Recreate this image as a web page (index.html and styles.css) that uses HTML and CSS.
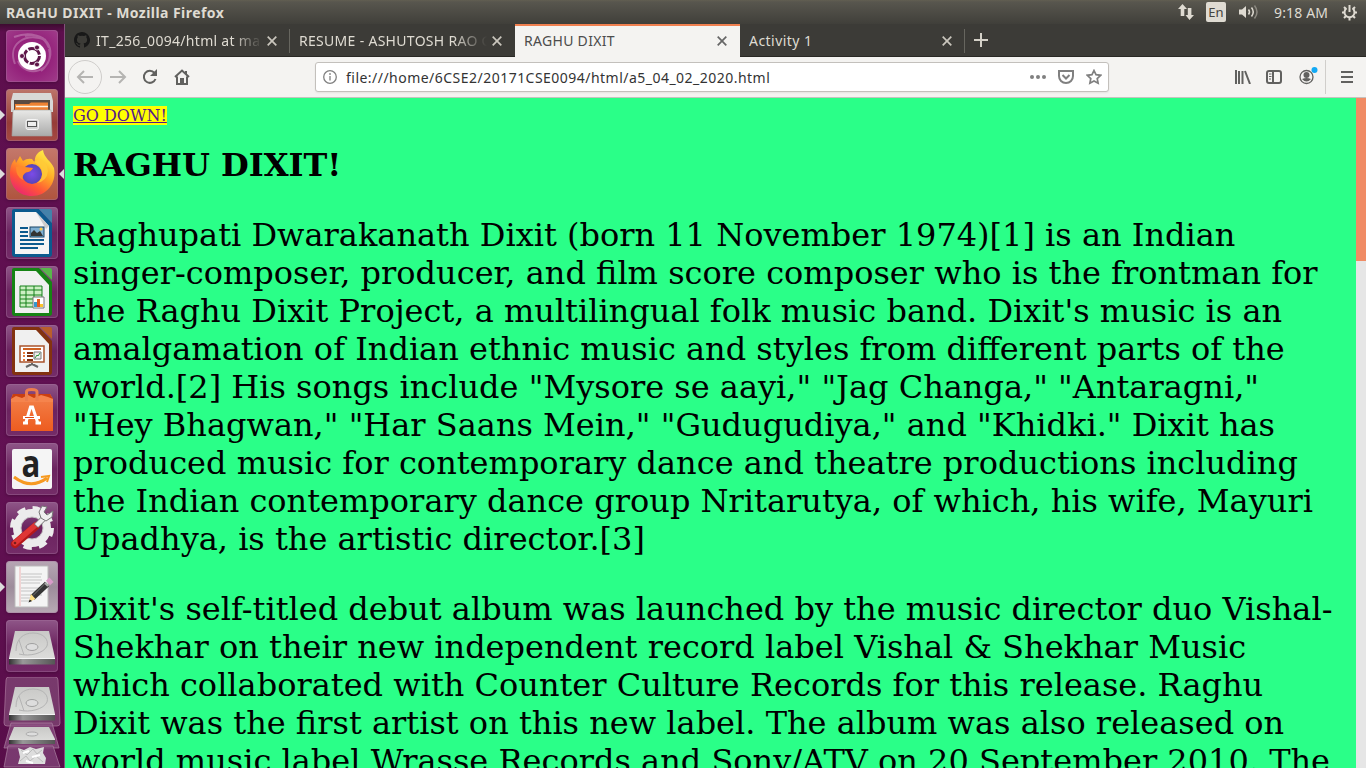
FILE: index.html
```html
<!DOCTYPE html>
<html lang="en">
<head>
<meta charset="utf-8">
<title>RAGHU DIXIT</title>
<link rel="stylesheet" href="styles.css">
</head>
<body>
<svg class="defs" width="0" height="0">
  <defs>
    <linearGradient id="silver" x2="0" y2="1"><stop stop-color="#e9e9e7"/><stop offset="1" stop-color="#aaa"/></linearGradient>
    <linearGradient id="metal" x2="0" y2="1"><stop stop-color="#c9c9c7"/><stop offset="1" stop-color="#e0e0de"/></linearGradient>
    <linearGradient id="orange" x2="0" y2="1"><stop stop-color="#f3824b"/><stop offset="1" stop-color="#ed5c20"/></linearGradient>
    <linearGradient id="fire" x1=".8" y1="0" x2=".2" y2="1"><stop stop-color="#fff04b"/><stop offset=".4" stop-color="#ffab25"/><stop offset=".7" stop-color="#ff5636"/><stop offset="1" stop-color="#e82079"/></linearGradient>
    <radialGradient id="globe"><stop stop-color="#7c4be8"/><stop offset="1" stop-color="#5745b8"/></radialGradient>
    <linearGradient id="edge" x2="1" y2="0"><stop stop-color="#333"/><stop offset=".3" stop-color="#999"/><stop offset="1" stop-color="#555"/></linearGradient>
    <g id="drive">
      <path d="M9 11H43L49 38V44H3V38Z" fill="url(#metal)"/>
      <path d="M3 39H49V44.500H3Z" fill="url(#edge)"/><path d="M3 38.500H49" stroke="#f5f5f5"/>
      <path d="M10 31C10 19 17 13 27 13C38 13 43 20 41 26C38 33 24 37 13 34M13 20L18 35" fill="none" stroke="#b4b4b4"/>
      <ellipse cx="26" cy="27" rx="6" ry="3.500" fill="#ddd" stroke="#a0a0a0"/>
    </g>
  </defs>
</svg>
<header class="panel">
  <span class="panel-title">RAGHU DIXIT - Mozilla Firefox</span>
  <div class="indicators">
    <svg width="18" height="18" viewBox="0 0 18 18"><path d="M5.500 1L10 6H7.300V13H3.700V6H1ZM12.500 17L8.500 12H10.800V5H14.400V12H17Z" fill="#dfdbd2"/></svg>
    <span class="lang">En</span>
    <svg class="sound" width="20" height="16" viewBox="0 0 20 16"><path d="M0 5.500H3L7 2V14L3 10.500H0Z" fill="#dfdbd2"/><path d="M9.500 5.500Q11.500 8 9.500 10.500M12.500 3.500Q16 8 12.500 12.500" fill="none" stroke="#dfdbd2" stroke-width="1.500"/><path d="M15.500 1.500Q20.500 8 15.500 14.500" fill="none" stroke="#8b8880" stroke-width="1.500"/></svg>
    <span class="clock">9:18 AM</span>
    <svg class="gear" width="17" height="17" viewBox="0 0 17 17"><g fill="none" stroke="#dfdbd2" stroke-width="2"><path d="M5.500 4.300A5 5 0 1 0 11.500 4.300M8.500 1V8"/><path d="M8.500 13V16.500M1 8.500H4M13 8.500H16M3 3L5 5M14 3L12 5M3 14L5 12M14 14L12 12"/></g></svg>
  </div>
</header>
<div class="desktop">
<nav class="launcher">
  <div class="tile dash"><svg viewBox="0 0 52 52"><g fill="none" stroke="#fff" stroke-opacity=".25" stroke-width="2"><path d="M9 34C1 14 19 2 40 10M19 6C42 0 54 25 35 41M43 19C49 42 20 49 12 31M8 7C24 1 38 5 43 18"/></g><circle cx="26" cy="26" r="14" fill="#fff"/><circle cx="26" cy="26" r="7.500" fill="none" stroke="#5e1649" stroke-width="3" stroke-dasharray="14 1.700"/><g fill="#5e1649" stroke="#fff" stroke-width=".8"><circle cx="16" cy="26" r="2.500"/><circle cx="31" cy="17.500" r="2.500"/><circle cx="31" cy="34.500" r="2.500"/></g></svg></div>
  <div class="tile red run"><svg viewBox="0 0 52 52"><path d="M7 4H45L47 12V23H5V12Z" fill="#d8d8d6"/><path d="M8 11H44V22H8Z" fill="#5a4a42"/><path d="M9 15H23L25 13.500H42V22H9Z" fill="#ef8232"/><path d="M10 17.500H42" stroke="#fff2df" stroke-width="1.500"/><path d="M7 21H45L46 47H6Z" fill="url(#silver)" stroke="#a3a3a0" stroke-width=".6"/><rect x="20" y="30.500" width="12.500" height="10" rx="2" fill="#d3d3d3" stroke="#f4f4f4"/><rect x="21.500" y="32.500" width="9" height="5" fill="#eee" stroke="#555"/></svg></div>
  <div class="tile red run active"><svg viewBox="0 0 52 52"><path d="M4 26C4 19 6 14 9 11L10 15L14 8L17 13Q21 10 26 11L29 15C28 9 31 4 37 2C38 10 45 13 48 20C51 36 40 48 26 48C13 48 4 39 4 26Z" fill="url(#fire)"/><circle cx="26" cy="26" r="10" fill="url(#globe)"/><path d="M10 19Q14 17 19 19L27 20Q25 24 20 24.500C17 26 16 29 17 32Q10 29 10 19Z" fill="#ff8a2c"/><path d="M27 14Q34 16 36 23Q37 31 31 35Q41 33 42 23Q41 14 34 11Z" fill="#ffcc38" opacity=".8"/></svg></div>
  <div class="tile writer"><svg viewBox="0 0 52 52"><path d="M8 2H33L46 16V47Q46 50 43 50H9Q6 50 6 47V4Q6 2 8 2Z" fill="#0b5a8e"/><path d="M33 2H44Q46 2 46 4V16Z" fill="#4382aa"/><path d="M9 5H30L43 19V47H9Z" fill="#f4f4f4"/><path d="M30 5L43 19L40 22Z" fill="#ccc"/><g stroke="#0b5a8e" stroke-width="2"><path d="M14 21H22M14 25H22M14 29H22M14 33H38M14 37H38M14 41H32"/></g><rect x="24" y="20" width="14" height="10" fill="#7eafd2" stroke="#174465"/><path d="M25 29V26L28 23L31 26L34 24L37 29Z" fill="#333"/><circle cx="35" cy="22" r="1.500" fill="#ffce45"/></svg></div>
  <div class="tile"><svg viewBox="0 0 52 52"><path d="M8 2H33L46 16V47Q46 50 43 50H9Q6 50 6 47V4Q6 2 8 2Z" fill="#168314"/><path d="M34 2H44Q46 2 46 4V14Z" fill="#58b64b"/><path d="M9 5H30L43 19V47H9Z" fill="#f0f0f0"/><path d="M14 20H36V41H14Z" fill="#ccefc3" stroke="#16811b"/><path d="M14 24H36M14 29H36M14 33H36M14 37H36M20 20V41M28 20V41" stroke="#16811b"/><path d="M27 31H38V42H27Z" fill="#fff" stroke="#777"/><path d="M28 36H31V41H28Z" fill="#3498d0"/><path d="M31 33H34V41H31Z" fill="#e45c20"/><path d="M34 38H37V41H34Z" fill="#fcc32c"/></svg></div>
  <div class="tile"><svg viewBox="0 0 52 52"><path d="M8 2H33L46 16V47Q46 50 43 50H9Q6 50 6 47V4Q6 2 8 2Z" fill="#833210"/><path d="M34 2H44Q46 2 46 4V14Z" fill="#b95e2b"/><path d="M9 5H30L43 19V47H9Z" fill="#f0f0f0"/><path d="M14 21H38V37H14Z" fill="#fff" stroke="#a9532d" stroke-width="1.500"/><path d="M17 24H35" stroke="#cf6021" stroke-width="2"/><path d="M21 28H27M21 31H27M21 35H27" stroke="#81300f" stroke-width="2"/><path d="M17 28H19M17 31H19M17 35H19" stroke="#e57b3b" stroke-width="2"/><path d="M28 27H35V34H28Z" fill="#eee" stroke="#777"/><path d="M29 33L31 30L32 31L34 28" fill="none" stroke="#2b9b3d"/><path d="M26 38V40M26 39L20 42M26 39L32 42" stroke="#666" stroke-width="2"/></svg></div>
  <div class="tile"><svg viewBox="0 0 52 52"><path d="M7 10H44L47 15V47H5V15Z" fill="url(#orange)"/><path d="M5 15H47L44 10H7Z" fill="#ca3f10"/><path d="M5 15L10 12L16 14L22 11L28 14L35 11L42 13L47 15V18H5Z" fill="#f5844d"/><path d="M20.500 17V8Q20.500 5.500 25.500 5.500Q31 5.500 31 8V17" fill="none" stroke="#ec7d4e" stroke-width="3"/><path d="M20 38L24.500 23H26.500L31.500 38M17 33.500H34M17 39H22M29.500 39H35" fill="none" stroke="#fff" stroke-width="3"/><path d="M19 33.500H28" stroke="#dd4812"/></svg></div>
  <div class="tile"><svg viewBox="0 0 52 52"><rect x="6" y="6" width="40" height="40" rx="2" fill="#f5f5f5"/><text class="amazon" transform="translate(15.500 33.500) scale(.82 1)">a</text><path d="M8 34Q25 47 41 35" fill="none" stroke="#f69a22" stroke-width="3"/><path d="M35 34L43 33L41 39" fill="none" stroke="#f69a22" stroke-width="2"/></svg></div>
  <div class="tile"><svg viewBox="0 0 52 52"><circle cx="26" cy="26" r="15" fill="none" stroke="#ececec" stroke-width="8"/><circle cx="26" cy="26" r="19" fill="none" stroke="#ececec" stroke-width="6" stroke-dasharray="8 6.920"/><circle cx="26" cy="26" r="11" fill="none" stroke="#c1c1c1"/><path d="M30 24L9 42" stroke="#b41819" stroke-width="8" stroke-linecap="round"/><path d="M29.500 23L9 41" stroke="#df3635" stroke-width="5.500" stroke-linecap="round"/><path d="M30 24L37 17" stroke="#777" stroke-width="6"/><path d="M30.500 23.500L38 16" stroke="#eee" stroke-width="4.500"/><path d="M36 4L33 10L35 16L40 19L46 15L47 9L41 13L38 10L41 5Z" fill="#eee" stroke="#777"/><circle cx="9" cy="41" r="1.300" fill="#761c1c"/></svg></div>
  <div class="tile gray run"><svg viewBox="0 0 52 52"><path d="M9 5H42V46H9Z" fill="#f4f4f4" stroke="#bbb"/><path d="M14 6V45" stroke="#edb4b4"/><path d="M15 13H36M15 16H35M15 19H36M15 22H34M15 27H36M15 30H32M15 34H36M15 37H28M15 40H26" stroke="#c4c4c4"/><path d="M26.500 36.500L41 23" stroke="#353535" stroke-width="6"/><path d="M27 34.500L40 21.500" stroke="#777"/><path d="M42 22L45.500 18.700" stroke="#d99bc9" stroke-width="6"/><path d="M39 22L42 25" stroke="#aaa" stroke-width="2"/><path d="M25 33L29.500 38L23 41Z" fill="#ffe083"/><path d="M23.700 38.500L22.500 41.500L26 40Z" fill="#222"/></svg></div>
  <div class="tile"><svg viewBox="0 0 52 52"><use href="#drive"/></svg></div>
  <div class="stack">
    <svg width="60" height="91" viewBox="0 0 60 91">
      <path d="M6 0H52Q55 0 55 3L57 46Q57 49 54 49H4Q1 49 1 46L3 3Q3 0 6 0Z" fill="#fff" fill-opacity=".18" stroke="#b783a9" stroke-opacity=".6"/>
      <use href="#drive" transform="translate(3 -1)"/>
      <path d="M8 46H49L56 71H1Z" fill="#8f5284" fill-opacity=".7" stroke="#ab80a1" stroke-opacity=".7"/>
      <path d="M11 50H46L52 62V67H6V62Z" fill="url(#metal)"/><path d="M6 63H52V67H6Z" fill="url(#edge)"/><ellipse cx="29" cy="57" rx="6" ry="2" fill="#ddd" stroke="#aaa"/>
      <path d="M5 69H50L57 90H1Z" fill="#814378" fill-opacity=".8" stroke="#ab80a1" stroke-opacity=".7"/>
      <path d="M15 71L21 73L27 70L33 72L41 70L40 76L43 81L42 87H15L17 80Z" fill="#ddd"/><path d="M18 73L24 78L30 72L34 77L39 73M17 84L23 79L27 84L33 79L40 85" fill="none" stroke="#bbb"/><path d="M20 76L26 74M29 80L37 78M23 84L30 86" stroke="#fff" stroke-width="2"/>
    </svg>
  </div>
</nav>
<main class="window">
  <div class="tabs">
    <div class="tab first"><svg class="github" width="16" height="16" viewBox="0 0 16 16"><path fill="#181818" d="M8 0C3.580 0 0 3.580 0 8c0 3.540 2.290 6.530 5.470 7.590.4.070.55-.17.55-.38v-1.500c-2.010.37-2.530-.49-2.690-.94-.09-.23-.48-.94-.82-1.130-.28-.15-.68-.52-.01-.53.63-.01 1.080.58 1.230.82.72 1.210 1.870.87 2.330.66.07-.52.28-.87.51-1.070-1.780-.2-3.640-.89-3.640-3.950 0-.87.31-1.590.82-2.150-.08-.2-.36-1.020.08-2.120 0 0 .67-.21 2.200.82a7.500 7.500 0 0 1 4 0c1.530-1.040 2.200-.82 2.200-.82.44 1.100.16 1.920.08 2.120.51.56.82 1.270.82 2.150 0 3.070-1.870 3.750-3.650 3.950.29.25.54.73.54 1.480v2.200c0 .21.15.46.55.38A8 8 0 0 0 8 0Z"/></svg><span class="label t1">IT_256_0094/html at ma</span><svg class="close" viewBox="0 0 10 10"><path d="M.7.7L9.300 9.300M9.300.7L.7 9.300"/></svg></div>
    <div class="tab"><span class="label t2">RESUME - ASHUTOSH RAO G</span><svg class="close" viewBox="0 0 10 10"><path d="M.7.7L9.300 9.300M9.300.7L.7 9.300"/></svg></div>
    <div class="tab current"><span class="label t3">RAGHU DIXIT</span><svg class="close" viewBox="0 0 10 10"><path d="M.7.7L9.300 9.300M9.300.7L.7 9.300"/></svg></div>
    <div class="tab last"><span class="label t4">Activity 1</span><svg class="close" viewBox="0 0 10 10"><path d="M.7.7L9.300 9.300M9.300.7L.7 9.300"/></svg></div>
    <svg class="plus" width="14" height="14" viewBox="0 0 14 14"><path d="M7 0V14M0 7H14"/></svg>
  </div>
  <div class="toolbar">
    <div class="back"><svg width="18" height="16" viewBox="0 0 18 16"><path d="M17 8H2M8 2L2 8L8 14"/></svg></div>
    <svg class="forward" width="18" height="16" viewBox="0 0 18 16"><path d="M1 8H16M10 2L16 8L10 14"/></svg>
    <svg class="reload" width="16" height="16" viewBox="0 0 16 16"><path d="M13.500 10A6 6 0 1 1 12.500 4"/><path d="M15 0V7H8Z" class="solid"/></svg>
    <svg class="home" width="16" height="16" viewBox="0 0 16 16"><path d="M1 8L8 1.500L15 8M3 7.500V15H13V7.500M12 2V5"/><path d="M6 9H10V15H6Z" class="solid"/></svg>
    <div class="address">
      <svg class="info" width="14" height="14" viewBox="0 0 14 14"><circle cx="7" cy="7" r="6.300"/><path d="M7 6V10.500M7 3V5"/></svg>
      <span class="url">file:///home/6CSE2/20171CSE0094/html/a5_04_02_2020.html</span>
      <svg class="dots" width="16" height="4" viewBox="0 0 16 4"><circle cx="2" cy="2" r="2"/><circle cx="8" cy="2" r="2"/><circle cx="14" cy="2" r="2"/></svg>
      <svg class="pocket" width="16" height="14" viewBox="0 0 16 14"><path d="M1 1H15V6C15 10 12 13 8 13S1 10 1 6ZM4.500 5L8 8.500L11.500 5"/></svg>
      <svg class="star" width="16" height="16" viewBox="0 0 16 16"><path d="M8 1.500L10 5.700L14.700 6.300L11.200 9.500L12.100 14.200L8 12L3.900 14.200L4.800 9.500L1.300 6.300L6 5.700Z"/></svg>
    </div>
    <svg class="library" width="16" height="14" viewBox="0 0 16 14"><path d="M1 0V14M4 1V14M7.500 1V14M10 1L15 14"/></svg>
    <svg class="sidebar" width="16" height="14" viewBox="0 0 16 14"><rect x="1" y="1" width="14" height="12" rx="2"/><path d="M7 1V13" /><path d="M3 4H5.500M3 6.500H5.500M3 9H5" class="thin"/></svg>
    <svg class="account" width="21" height="20" viewBox="0 0 21 20"><circle cx="7.500" cy="12" r="6.500"/><circle cx="7.500" cy="10" r="3" class="solid"/><path d="M3 14Q7.500 12 12 14Q7.500 19 3 14" class="solid"/><circle cx="15.500" cy="5" r="3" class="dot"/></svg>
    <div class="menu"><svg width="12" height="12" viewBox="0 0 12 12"><path d="M0 1H12M0 6H12M0 11H12"/></svg></div>
  </div>
  <div class="viewport">
    <article>
      <div class="down"><a href="#end">GO DOWN!</a></div>
      <h1>RAGHU DIXIT!</h1>
      <p>Raghupati Dwarakanath Dixit (born 11 November 1974)[1] is an Indian<br>singer-composer, producer, and film score composer who is the frontman for<br>the Raghu Dixit Project, a multilingual folk music band. Dixit's music is an<br>amalgamation of Indian ethnic music and styles from different parts of the<br>world.[2] His songs include "Mysore se aayi," "Jag Changa," "Antaragni,"<br>"Hey Bhagwan," "Har Saans Mein," "Gudugudiya," and "Khidki." Dixit has<br>produced music for contemporary dance and theatre productions including<br>the Indian contemporary dance group Nritarutya, of which, his wife, Mayuri<br>Upadhya, is the artistic director.[3]</p>
      <p id="end">Dixit's self-titled debut album was launched by the music director duo Vishal-<br>Shekhar on their new independent record label Vishal &amp; Shekhar Music<br>which collaborated with Counter Culture Records for this release. Raghu<br>Dixit was the first artist on this new label. The album was also released on<br>world music label Wrasse Records and Sony/ATV on 20 September 2010. The</p>
    </article>
    <div class="scrollbar"><div class="thumb"></div></div>
  </div>
</main>
</div>
</body>
</html>
```
FILE: styles.css
```css
* { box-sizing: border-box; }
html, body { margin: 0; height: 768px; overflow: hidden; }
body { display: flex; flex-direction: column; width: 1366px; font-family: "Noto Sans", sans-serif; font-size: 14px; }
svg { display: block; flex: none; }
.defs { height: 0; }
.panel { flex: none; height: 24px; display: flex; justify-content: space-between; align-items: center; padding: 0 8px 0 6px; background: linear-gradient(#625f51, #58564e 2px, #403f3a); color: #dfdbd2; }
.panel-title { font-weight: 700; font-size: 14px; letter-spacing: .44px; white-space: nowrap; }
.indicators { display: flex; align-items: center; }
.lang { width: 20px; height: 20px; margin: 0 13px 0 11px; border-radius: 2px; background: #dfdbd2; color: #45443f; line-height: 20px; text-align: center; font-size: 13px; }
.clock { width: 55px; margin: 0 12px 0 15px; white-space: nowrap; letter-spacing: .15px; }
.desktop { display: flex; flex: 1; min-height: 0; }
.launcher { width: 65px; flex: none; display: flex; flex-direction: column; gap: 7px; padding: 6px 0 0 6px; border-right: 1px solid #83517b; background: linear-gradient(#3d0b30, #5d0f4d 8px, #621153 60%, #580d49); }
.tile { position: relative; width: 52px; height: 52px; flex: none; border-radius: 4px; background: linear-gradient(#8f5688, #6b235f 50%, #742c68); box-shadow: inset 0 0 0 1px #a6729d66, 0 1px 3px #2d052666; }
.tile svg { width: 52px; height: 52px; }
.dash { background: radial-gradient(#a13887, #94227b 50%, #a13d8b); }
.red { background: linear-gradient(#bd756a, #963c38 65%, #a64942); }
.active { background: linear-gradient(#c4786b, #af543e); }
.gray { background: linear-gradient(#b7a6b4, #9d8c9b 50%, #b7a9b4); }
.run::before { content: ""; position: absolute; left: -6px; top: 21px; border: 5px solid transparent; border-left-color: #ddd; border-right: 0; }
.active::after { content: ""; position: absolute; right: -6px; top: 21px; border: 5px solid transparent; border-right-color: #ddd; border-left: 0; }
.amazon { font: bold 38px "Open Sans", sans-serif; fill: #222; }
.stack { margin: -2px 0 0 -3px; }
.window { width: 1301px; display: flex; flex-direction: column; }
.tabs { height: 33px; display: flex; flex: none; background: #3c3b37; color: #dfdbd2; border-bottom: 1px solid #292824; }
.tab { position: relative; width: 225px; height: 33px; display: flex; align-items: center; justify-content: space-between; padding: 0 13px 1px 9px; white-space: nowrap; }
.tab:first-child::after, .last::after { content: ""; position: absolute; right: 0; top: 5px; height: 24px; border-right: 1px solid #67665f; }
.label { overflow: hidden; letter-spacing: .3px; }
.first .label { width: 166px; margin-right: 5px; margin-left: 6px; }
.t1, .t2 { -webkit-mask-image: linear-gradient(90deg, #000 82%, transparent); mask-image: linear-gradient(90deg, #000 82%, transparent); }
.t2 { width: 188px; }
.t4 { letter-spacing: .45px; }
.current { background: #f4f3f1; color: #4c4c4c; border-top: 2px solid #f08050; padding-bottom: 3px; }
.close { width: 10px; height: 10px; margin-top: 1px; fill: none; stroke: #cac6bd; stroke-width: 1.7; }
.current .close { stroke: #666; }
.plus { margin: 9px 0 0 9px; fill: none; stroke: #d5d1c8; stroke-width: 2; }
.toolbar { height: 41px; flex: none; display: flex; align-items: center; background: #f4f3f1; border-bottom: 1px solid #c5c2be; padding: 0 0 0 3px; fill: none; stroke: #61615f; stroke-width: 2; }
.toolbar .solid { fill: #61615f; stroke: none; }
.back { width: 34px; height: 34px; border: 1px solid #cfcdcb; border-radius: 50%; display: flex; align-items: center; justify-content: center; stroke: #b5b4b2; }
.forward { margin-left: 7px; stroke: #b5b4b2; }
.reload { margin-left: 15px; }
.home { margin-left: 16px; }
.address { width: 794px; height: 30px; display: flex; align-items: center; margin: 0 125px 0 125px; padding: 0 6px 0 7px; background: #fff; border: 1px solid #c3c0bc; border-radius: 3px; box-shadow: 0 1px 2px #0001; stroke: #808080; }
.info { stroke-width: 1.3; }
.url { width: 693px; padding-left: 9px; white-space: nowrap; color: #333; letter-spacing: .475px; }
.dots { fill: #808080; stroke: none; }
.pocket { margin-left: 12px; }
.star { margin-left: 12px; stroke-width: 1.7; }
.library { margin-left: 1px; }
.sidebar { margin-left: 15px; }
.thin { stroke-width: 1; }
.account { margin: -5px 0 0 17px; stroke-width: 1.3; }
.account .dot { fill: #13a9f4; stroke: none; }
.menu { height: 34px; display: flex; align-items: center; margin-left: 5px; padding-left: 15px; border-left: 1px solid #d0cecb; }
.viewport { display: flex; flex: 1; min-height: 0; overflow: hidden; background: #2aff88; }
article { width: 1291px; padding: 8px 0 0 8px; flex: none; color: #000; font-family: "DejaVu Serif", serif; white-space: nowrap; }
.down { height: 19px; font-size: 16px; line-height: 19px; }
.down a { color: #551a8b; background: #ff0; }
h1 { margin: 21px 0 32px; font-size: 32px; line-height: 38px; }
p { margin: 0 0 32px; font-size: 32px; line-height: 38px; }
.scrollbar { width: 10px; background: #e6e6e6; }
.thumb { height: 163px; background: #f08b64; }
```
